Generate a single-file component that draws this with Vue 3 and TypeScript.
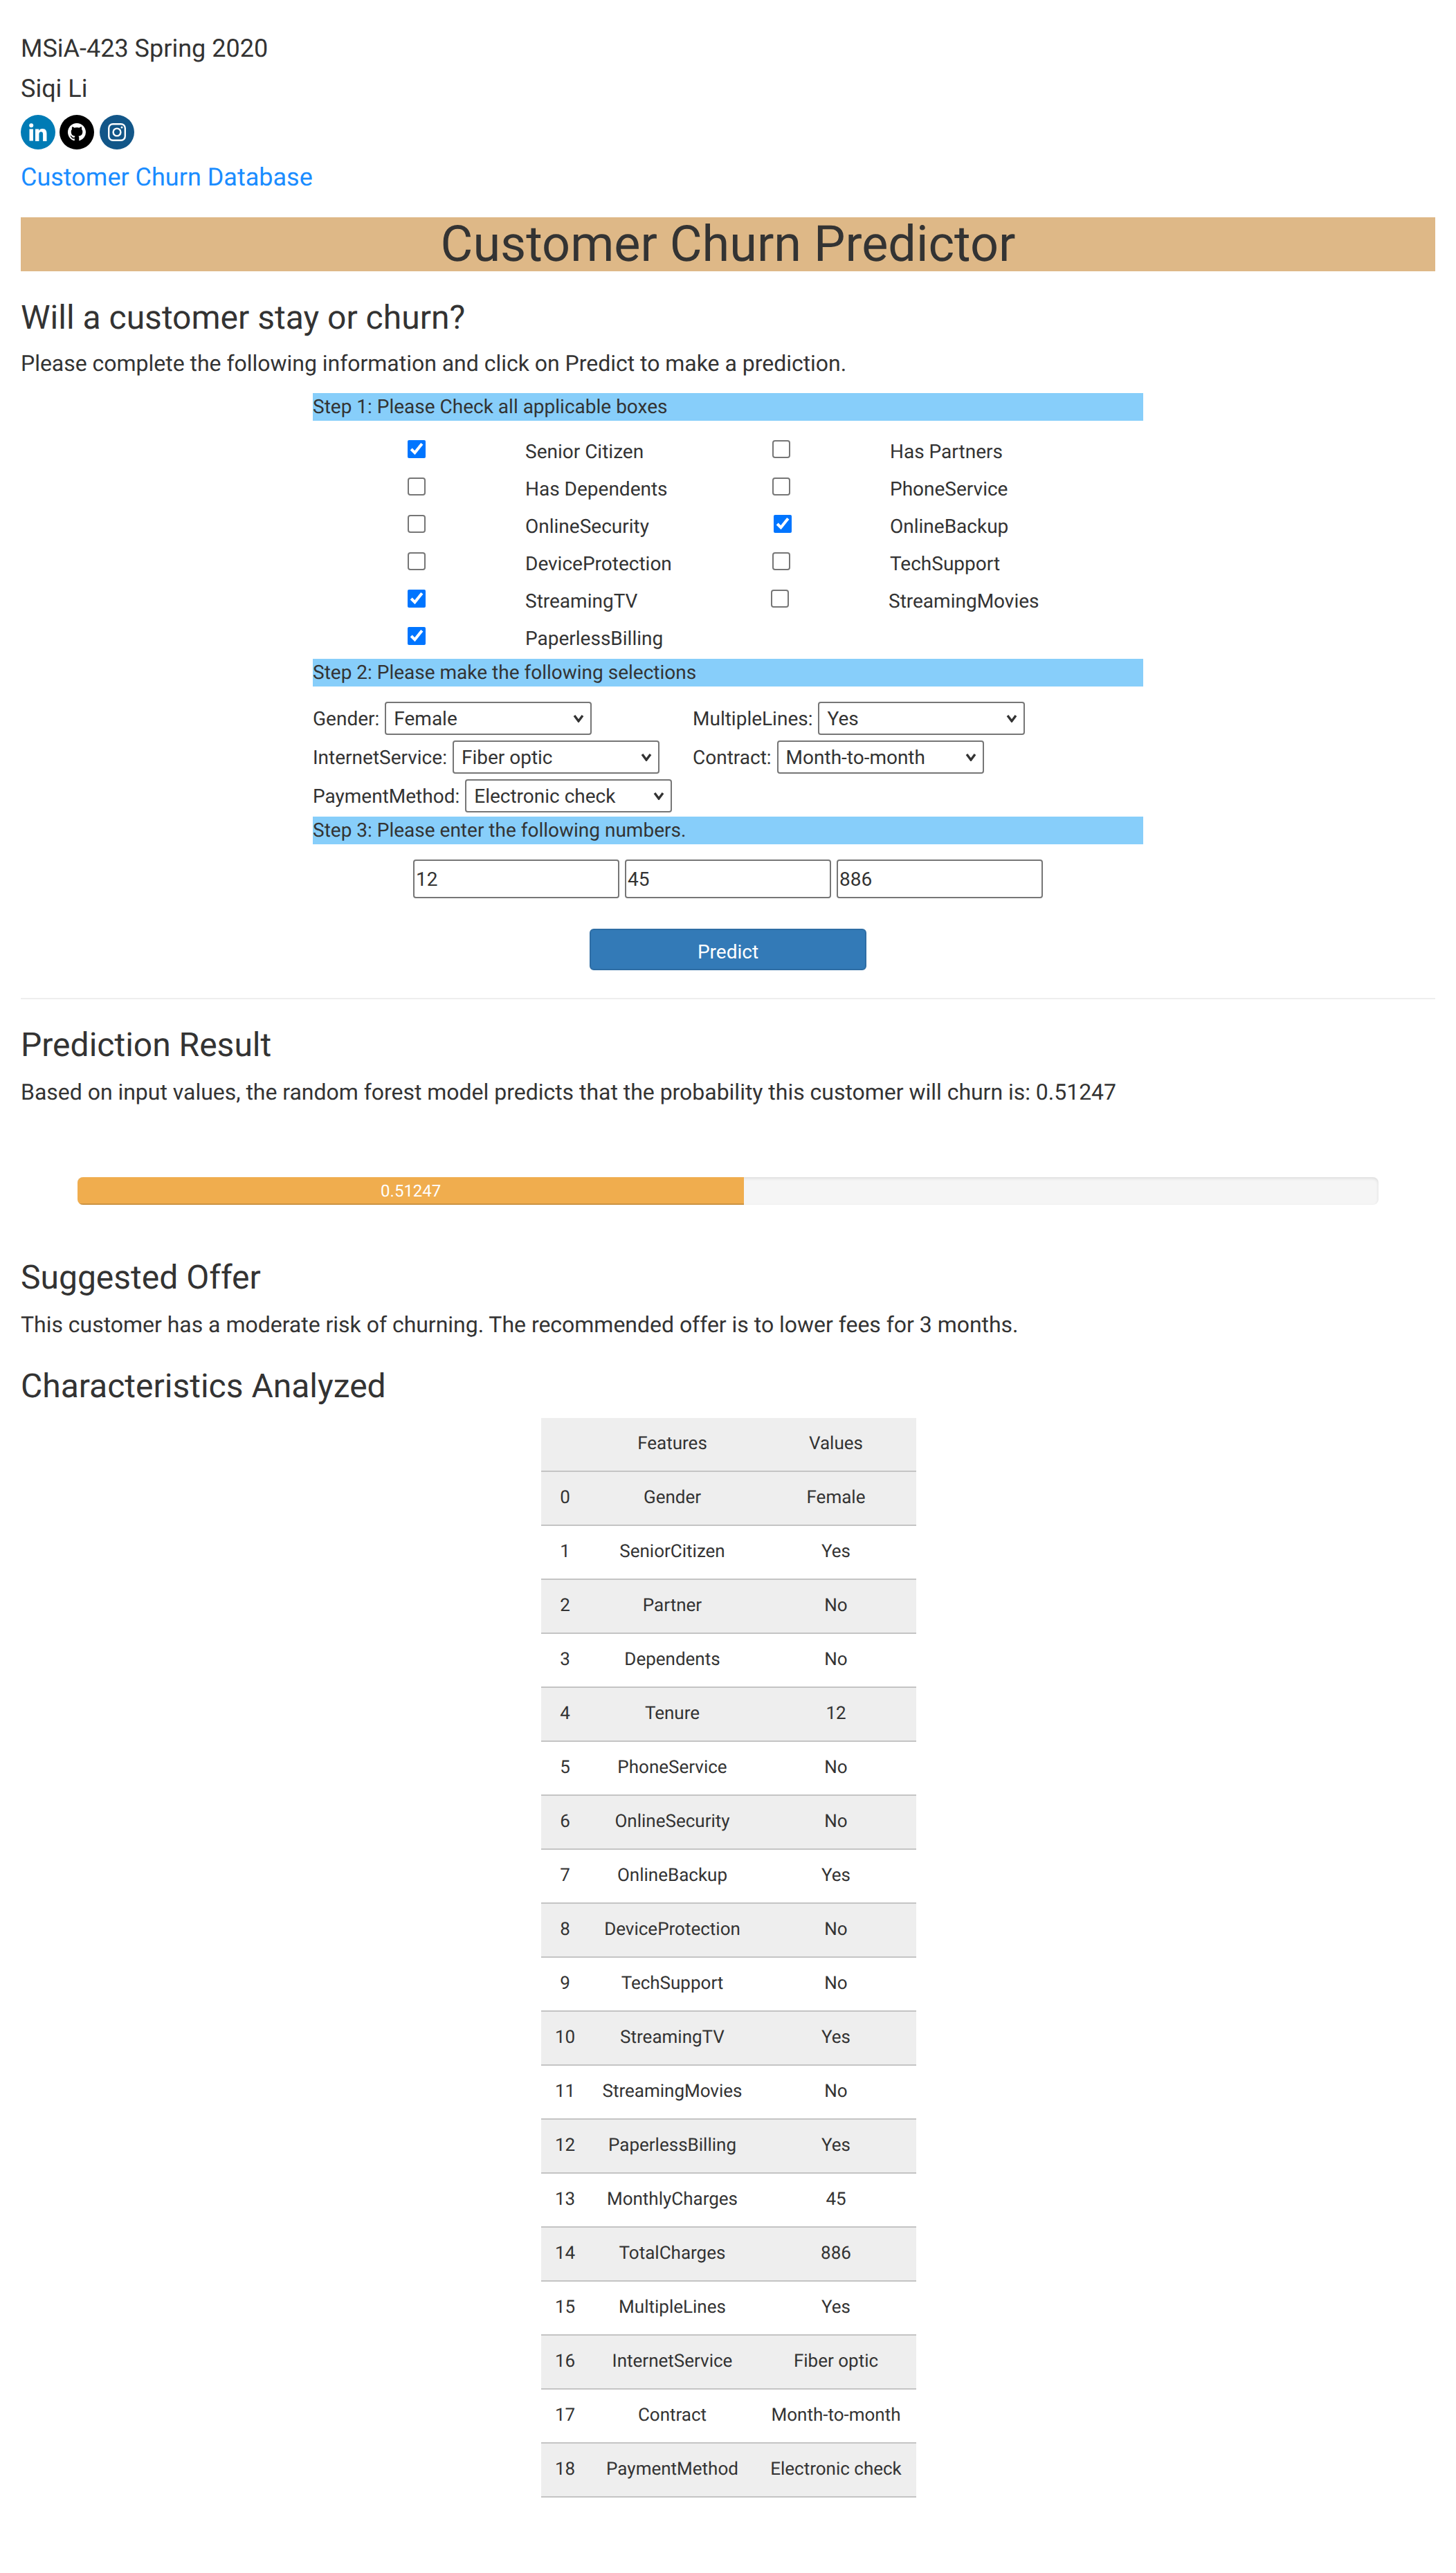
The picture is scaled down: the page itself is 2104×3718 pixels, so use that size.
<script setup lang="ts">
interface CheckItem {
  label: string
  checked: boolean
  nudge?: string
}

const checks: CheckItem[] = [
  { label: 'Senior Citizen', checked: true },
  { label: 'Has Partners', checked: false },
  { label: 'Has Dependents', checked: false },
  { label: 'PhoneService', checked: false },
  { label: 'OnlineSecurity', checked: false },
  { label: 'OnlineBackup', checked: true, nudge: 'right' },
  { label: 'DeviceProtection', checked: false },
  { label: 'TechSupport', checked: false },
  { label: 'StreamingTV', checked: true },
  { label: 'StreamingMovies', checked: false, nudge: 'left' },
  { label: 'PaperlessBilling', checked: true },
]

const selects = [
  { label: 'Gender:', value: 'Female', options: ['Female', 'Male'] },
  { label: 'MultipleLines:', value: 'Yes', options: ['Yes', 'No'] },
  { label: 'InternetService:', value: 'Fiber optic', options: ['Fiber optic', 'DSL', 'No'] },
  { label: 'Contract:', value: 'Month-to-month', options: ['Month-to-month', 'One year', 'Two year'] },
  { label: 'PaymentMethod:', value: 'Electronic check', options: ['Electronic check', 'Mailed check'] },
]

const numbers = ['12', '45', '886']
const probability = 0.51247

const rows: [string, string][] = [
  ['Gender', 'Female'],
  ['SeniorCitizen', 'Yes'],
  ['Partner', 'No'],
  ['Dependents', 'No'],
  ['Tenure', '12'],
  ['PhoneService', 'No'],
  ['OnlineSecurity', 'No'],
  ['OnlineBackup', 'Yes'],
  ['DeviceProtection', 'No'],
  ['TechSupport', 'No'],
  ['StreamingTV', 'Yes'],
  ['StreamingMovies', 'No'],
  ['PaperlessBilling', 'Yes'],
  ['MonthlyCharges', '45'],
  ['TotalCharges', '886'],
  ['MultipleLines', 'Yes'],
  ['InternetService', 'Fiber optic'],
  ['Contract', 'Month-to-month'],
  ['PaymentMethod', 'Electronic check'],
]
</script>

<template>
  <div class="page">
    <p class="line">MSiA-423 Spring 2020</p>
    <p class="line">Siqi Li</p>
    <div class="socials">
      <a class="social linkedin" href="#">
        <svg viewBox="0 0 26 26" width="26" height="26">
          <circle cx="3.2" cy="3.2" r="3" fill="#fff" />
          <rect x="0.5" y="8.5" width="5.4" height="17" fill="#fff" />
          <path fill="#fff" d="M9 8.5h5.2v2.4c.8-1.5 2.6-2.8 5.1-2.8 5 0 6.2 3.2 6.2 7.5v10.4h-5.4v-9.2c0-2.2-.1-4.4-2.7-4.4-2.7 0-3 2.1-3 4.3v9.3H9z" />
        </svg>
      </a>
      <a class="social github" href="#">
        <svg viewBox="0 0 16 16" width="26" height="26">
          <path fill="#fff" d="M8 0C3.58 0 0 3.58 0 8c0 3.54 2.29 6.53 5.47 7.59.4.07.55-.17.55-.38 0-.19-.01-.82-.01-1.49-2.01.37-2.53-.49-2.69-.94-.09-.23-.48-.94-.82-1.13-.28-.15-.68-.52-.01-.53.63-.01 1.08.58 1.23.82.72 1.21 1.87.87 2.33.66.07-.52.28-.87.51-1.07-1.78-.2-3.64-.89-3.64-3.95 0-.87.31-1.59.82-2.15-.08-.2-.36-1.02.08-2.12 0 0 .67-.21 2.2.82.64-.18 1.32-.27 2-.27.68 0 1.36.09 2 .27 1.53-1.04 2.2-.82 2.2-.82.44 1.1.16 1.92.08 2.12.51.56.82 1.27.82 2.15 0 3.07-1.87 3.75-3.65 3.95.29.25.54.73.54 1.48 0 1.07-.01 1.93-.01 2.2 0 .21.15.46.55.38A8.013 8.013 0 0016 8c0-4.42-3.58-8-8-8z" />
        </svg>
      </a>
      <a class="social instagram" href="#">
        <svg viewBox="0 0 26 26" width="26" height="26" fill="none" stroke="#fff">
          <rect x="1.2" y="1.2" width="23.6" height="23.6" rx="6" stroke-width="2.4" />
          <circle cx="13" cy="13" r="5.4" stroke-width="2.4" />
          <circle cx="20" cy="6" r="1.5" fill="#fff" stroke="none" />
        </svg>
      </a>
    </div>
    <a class="db-link" href="#">Customer Churn Database</a>

    <h1 class="title">Customer Churn Predictor</h1>
    <h2 class="heading first">Will a customer stay or churn?</h2>
    <p class="para intro">Please complete the following information and click on Predict to make a prediction.</p>

    <form class="form" @submit.prevent>
      <div class="step">Step 1: Please Check all applicable boxes</div>
      <div class="check-grid">
        <template v-for="item in checks" :key="item.label">
          <input
            type="checkbox"
            class="check"
            :class="item.nudge"
            :checked="item.checked"
          >
          <label class="check-label" :class="item.nudge">{{ item.label }}</label>
        </template>
      </div>

      <div class="step">Step 2: Please make the following selections</div>
      <div class="select-grid">
        <div v-for="s in selects" :key="s.label" class="select-cell">
          <label>{{ s.label }}</label>
          <select class="select" :value="s.value">
            <option v-for="o in s.options" :key="o">{{ o }}</option>
          </select>
        </div>
      </div>

      <div class="step">Step 3: Please enter the following numbers.</div>
      <div class="number-row">
        <input v-for="n in numbers" :key="n" class="number" type="text" :value="n">
      </div>
      <button class="predict" type="submit">Predict</button>
    </form>

    <hr class="rule">

    <h2 class="heading result">Prediction Result</h2>
    <p class="para">Based on input values, the random forest model predicts that the probability this customer will churn is: {{ probability }}</p>

    <div class="progress">
      <div class="progress-bar" :style="{ width: `${probability * 100}%` }">{{ probability }}</div>
    </div>

    <h2 class="heading offer">Suggested Offer</h2>
    <p class="para">This customer has a moderate risk of churning. The recommended offer is to lower fees for 3 months.</p>

    <h2 class="heading analyzed">Characteristics Analyzed</h2>
    <table class="data">
      <colgroup>
        <col class="col-index">
        <col class="col-feature">
        <col class="col-value">
      </colgroup>
      <thead>
        <tr>
          <th></th>
          <th>Features</th>
          <th>Values</th>
        </tr>
      </thead>
      <tbody>
        <tr v-for="(row, i) in rows" :key="row[0]">
          <td>{{ i }}</td>
          <td>{{ row[0] }}</td>
          <td>{{ row[1] }}</td>
        </tr>
      </tbody>
    </table>
  </div>
</template>

<style>
html,
body {
  background: #fff;
}
</style>

<style scoped>
.page {
  padding: 41px 30px 110px;
  font-family: Roboto, "Liberation Sans", sans-serif;
  color: #333;
  text-rendering: geometricPrecision;
}

.line {
  margin: 0;
  font-size: 36px;
  line-height: 58px;
}

.socials {
  display: flex;
  margin-top: 9px;
}

.social {
  display: flex;
  align-items: center;
  justify-content: center;
  width: 50px;
  height: 50px;
  border-radius: 50%;
}

.linkedin { background: #007bb5; }
.github { background: #000; margin-left: 6px; }
.instagram { background: #125688; margin-left: 8px; }

.db-link {
  display: block;
  margin-top: 11px;
  font-size: 36px;
  line-height: 58px;
  color: #1a8cff;
  text-decoration: none;
}

.title {
  margin: 29px 0 0;
  height: 78px;
  background: #deb887;
  font-size: 72px;
  font-weight: 400;
  line-height: 78px;
  text-align: center;
}

.heading {
  margin: 0;
  font-size: 48px;
  font-weight: 400;
  line-height: 60px;
}

.heading.first { margin-top: 37px; }
.heading.result { margin-top: 36px; }
.heading.offer { margin-top: 75px; }
.heading.analyzed { margin-top: 34px; }

.para {
  margin: 13px 0 0;
  font-size: 32px;
  line-height: 50px;
  letter-spacing: -0.025px;
}

.para.intro { margin-top: 11px; }

.form {
  width: 1200px;
  margin: 18px auto 0;
}

.step {
  height: 40px;
  background: #87cefa;
  font-size: 28px;
  line-height: 40px;
}

.check-grid {
  display: grid;
  grid-template-columns: 170px 357px 170px 1fr;
  grid-auto-rows: 46px;
  row-gap: 8px;
  padding: 28px 0 0 137px;
  font-size: 28px;
}

.check {
  width: 26px;
  height: 26px;
  margin: 0;
}

.check:not(:checked) {
  appearance: none;
  box-sizing: border-box;
  border: 2px solid #767676;
  border-radius: 4px;
  background: #fff;
}

.check-label {
  line-height: 34px;
}

.check.right { margin-left: 2px; }
.check.left { margin-left: -2px; }
.check-label.left { margin-left: -2px; }

.select-grid {
  display: grid;
  grid-template-columns: 549px 1fr;
  grid-auto-rows: 48px;
  row-gap: 8px;
  padding: 22px 0 6px;
  font-size: 28px;
}

.select-cell {
  display: flex;
  align-items: center;
  gap: 8px;
}

.select {
  appearance: none;
  box-sizing: border-box;
  width: 299px;
  height: 48px;
  border: 2px solid #767676;
  border-radius: 4px;
  background: #fff url("data:image/svg+xml,%3Csvg xmlns='http://www.w3.org/2000/svg' width='16' height='12' viewBox='0 0 16 12'%3E%3Cpath d='M2 2l6 8 6-8' fill='none' stroke='%23333' stroke-width='3.4'/%3E%3C/svg%3E") no-repeat right 9px center;
  color: #333;
  font: inherit;
  padding: 0 30px 0 11px;
}

.number-row {
  display: flex;
  justify-content: center;
  gap: 8px;
  padding-top: 22px;
}

.number {
  box-sizing: border-box;
  width: 298px;
  height: 56px;
  padding: 0 2px;
  border: 2px solid #767676;
  border-radius: 4px;
  color: #333;
  font: 28px Roboto, "Liberation Sans", sans-serif;
}

.predict {
  display: block;
  width: 400px;
  height: 60px;
  margin: 44px auto 0;
  padding: 6px 0 0;
  border: 2px solid #2e6da4;
  border-radius: 6px;
  background: #337ab7;
  color: #fff;
  font: 28px Roboto, "Liberation Sans", sans-serif;
}

.rule {
  height: 2px;
  margin: 40px 0 0;
  border: 0;
  background: #eee;
}

.progress {
  height: 40px;
  margin: 98px 82px 0;
  overflow: hidden;
  border-radius: 8px;
  background: #f5f5f5;
  box-shadow: inset 0 2px 4px rgba(0, 0, 0, 0.1);
}

.progress-bar {
  height: 100%;
  background: #f0ad4e;
  box-shadow: inset 0 -2px 0 rgba(0, 0, 0, 0.15);
  color: #fff;
  font-size: 24px;
  line-height: 40px;
  text-align: center;
}

.data {
  width: 542px;
  margin: 16px 0 0 752px;
  border-collapse: separate;
  border-spacing: 0;
  table-layout: fixed;
  font-size: 26px;
}

.col-index { width: 69px; }
.col-feature { width: 241px; }
.col-value { width: 232px; }

.data th,
.data td {
  box-sizing: border-box;
  height: 78px;
  padding: 0 0 2px;
  border: 0;
  border-bottom: 2px solid #c4c4c4;
  font-weight: 400;
  text-align: center;
}

.data thead tr,
.data tbody tr:nth-child(odd) {
  background: #eee;
}
</style>
